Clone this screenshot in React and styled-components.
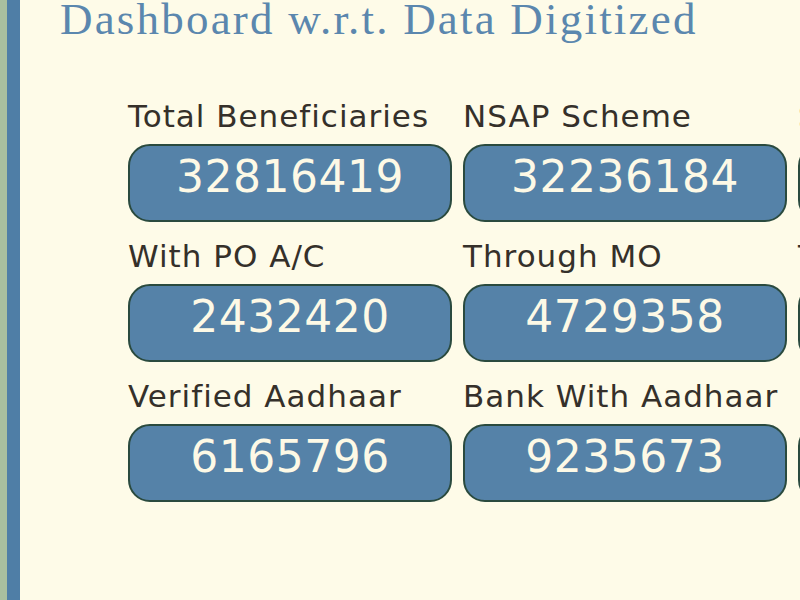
import React from "react";
import styled, { createGlobalStyle } from "styled-components";

const GlobalStyle = createGlobalStyle`
  html, body {
    margin: 0;
    padding: 0;
    background: #fefbe8;
    overflow: hidden;
  }
`;

const Page = styled.div`
  display: flex;
  width: 800px;
  height: 600px;
  overflow: hidden;
  background: #fefbe8;
`;

const SideBar = styled.div`
  flex: 0 0 13px;
  background: #4f7ea6;
  border-left: 7px solid #a9bf9f;
`;

const Main = styled.div`
  flex: 1;
  min-width: 0;
  padding-left: 40px;
  overflow: hidden;
`;

const Title = styled.h1`
  margin: -7px 0 0;
  font-family: "Liberation Serif", serif;
  font-weight: normal;
  font-size: 45px;
  letter-spacing: 2.2px;
  color: #5b87ae;
  white-space: nowrap;
`;

const Grid = styled.div`
  display: grid;
  grid-template-columns: repeat(3, 324px);
  column-gap: 11px;
  row-gap: 16px;
  margin: 53px 0 0 68px;
`;

const Cell = styled.div`
  display: flex;
  flex-direction: column;
`;

const Label = styled.div`
  font-family: "DejaVu Sans", Verdana, sans-serif;
  font-size: 31px;
  letter-spacing: 1px;
  color: #35302a;
  white-space: nowrap;
  margin-bottom: 10px;
`;

const Count = styled.div`
  box-sizing: border-box;
  height: 78px;
  padding-top: 5px;
  border: 2px solid #2a4a3e;
  border-radius: 22px;
  background: #5582a8;
  color: #fdf9e6;
  font-family: "DejaVu Sans", Verdana, sans-serif;
  font-size: 44px;
  letter-spacing: 0.5px;
  text-align: center;
`;

const stats = [
  ["Total Beneficiaries", "32816419"],
  ["NSAP Scheme", "32236184"],
  ["State Scheme", "584235"],
  ["With PO A/C", "2432420"],
  ["Through MO", "4729358"],
  ["Through Bank", "25654641"],
  ["Verified Aadhaar", "6165796"],
  ["Bank With Aadhaar", "9235673"],
  ["IFSC Verified", "21304912"],
];

export default function App() {
  return (
    <Page>
      <GlobalStyle />
      <SideBar />
      <Main>
        <Title>Dashboard w.r.t. Data Digitized</Title>
        <Grid>
          {stats.map(([label, value]) => (
            <Cell key={label}>
              <Label>{label}</Label>
              <Count>{value}</Count>
            </Cell>
          ))}
        </Grid>
      </Main>
    </Page>
  );
}
